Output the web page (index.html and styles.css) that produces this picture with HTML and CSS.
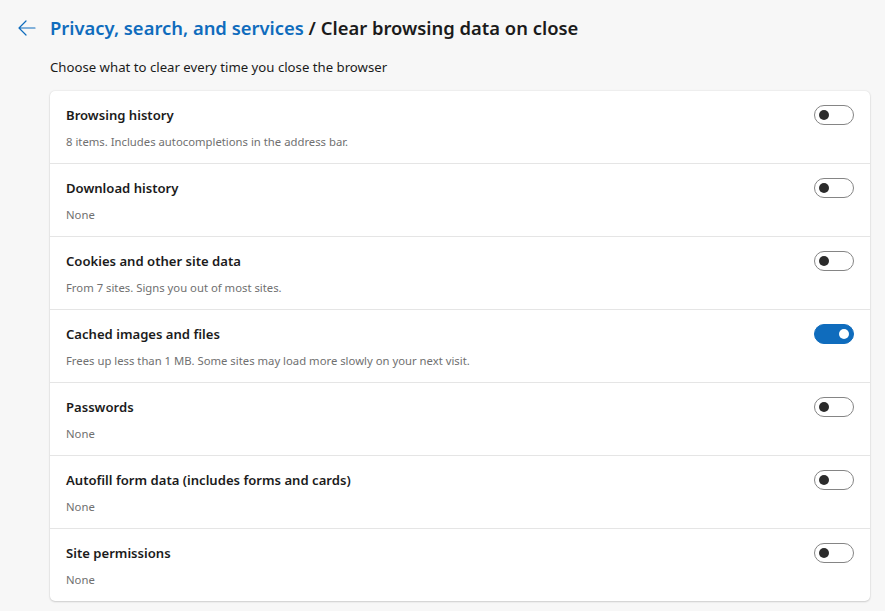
FILE: index.html
```html
<!DOCTYPE html>
<html lang="en">
<head>
<meta charset="utf-8">
<title>Clear browsing data on close</title>
<link rel="stylesheet" href="styles.css">
</head>
<body>
<div class="page">
  <header class="header">
    <button class="back" aria-label="Back">
      <svg width="18" height="16" viewBox="0 0 18 16"><path d="M1 8 H17 M1 8 L8 1 M1 8 L8 15" fill="none" stroke="#0f6cbd" stroke-width="1.2" stroke-linecap="round"/></svg>
    </button>
    <h1 class="title"><span class="crumb">Privacy, search, and services</span> / Clear browsing data on close</h1>
  </header>
  <p class="subtitle">Choose what to clear every time you close the browser</p>
  <section class="card">
    <div class="row">
      <div class="text"><div class="name">Browsing history</div><div class="desc">8 items. Includes autocompletions in the address bar.</div></div>
      <span class="toggle"></span>
    </div>
    <div class="row">
      <div class="text"><div class="name">Download history</div><div class="desc">None</div></div>
      <span class="toggle"></span>
    </div>
    <div class="row">
      <div class="text"><div class="name">Cookies and other site data</div><div class="desc">From 7 sites. Signs you out of most sites.</div></div>
      <span class="toggle"></span>
    </div>
    <div class="row">
      <div class="text"><div class="name">Cached images and files</div><div class="desc">Frees up less than 1 MB. Some sites may load more slowly on your next visit.</div></div>
      <span class="toggle on"></span>
    </div>
    <div class="row">
      <div class="text"><div class="name">Passwords</div><div class="desc">None</div></div>
      <span class="toggle"></span>
    </div>
    <div class="row">
      <div class="text"><div class="name">Autofill form data (includes forms and cards)</div><div class="desc">None</div></div>
      <span class="toggle"></span>
    </div>
    <div class="row">
      <div class="text"><div class="name">Site permissions</div><div class="desc">None</div></div>
      <span class="toggle"></span>
    </div>
  </section>
</div>
</body>
</html>
```
FILE: styles.css
```css
* { box-sizing: border-box; }
html, body { margin: 0; padding: 0; }
body {
  background: #f7f7f7;
  font-family: "Noto Sans", "Open Sans", sans-serif;
  color: #1b1b1b;
  height: 611px;
  overflow: hidden;
}
.page { padding: 14px 15px 0 18px; }
.header {
  display: flex;
  align-items: center;
  height: 28px;
}
.back {
  width: 32px;
  height: 28px;
  padding: 0;
  margin: 0;
  border: 0;
  background: none;
  display: flex;
  align-items: center;
}
.title {
  margin: 0;
  font-size: 18.4px;
  font-weight: 600;
  line-height: 28px;
  color: #1b1b1b;
  white-space: nowrap;
}
.crumb { color: #0f6cbd; }
.subtitle {
  margin: 15px 0 0 32px;
  font-size: 13.2px;
  line-height: 20px;
  color: #1b1b1b;
}
.card {
  margin: 14px 0 0 32px;
  background: #fff;
  border-radius: 5px;
  box-shadow: 0 0 2px rgba(0,0,0,0.12), 0 1px 2px rgba(0,0,0,0.14);
}
.row {
  display: flex;
  justify-content: space-between;
  align-items: flex-start;
  height: 73px;
  padding: 14px 16px 0 16px;
  border-bottom: 1px solid #e5e5e5;
}
.row:last-child { border-bottom: 0; height: 72px; }
.name {
  font-size: 13.1px;
  font-weight: 600;
  line-height: 20px;
}
.desc {
  margin-top: 9px;
  font-size: 11.3px;
  line-height: 16px;
  color: #707070;
}
.toggle {
  position: relative;
  width: 40px;
  height: 20px;
  border: 1px solid #858585;
  border-radius: 10px;
  flex: none;
}
.toggle::after {
  content: "";
  position: absolute;
  left: 4px;
  top: 4px;
  width: 10px;
  height: 10px;
  border-radius: 50%;
  background: #2b2b2b;
}
.toggle.on {
  background: #0f6cbd;
  border-color: #0f6cbd;
}
.toggle.on::after {
  left: auto;
  right: 4px;
  background: #fff;
}
```
